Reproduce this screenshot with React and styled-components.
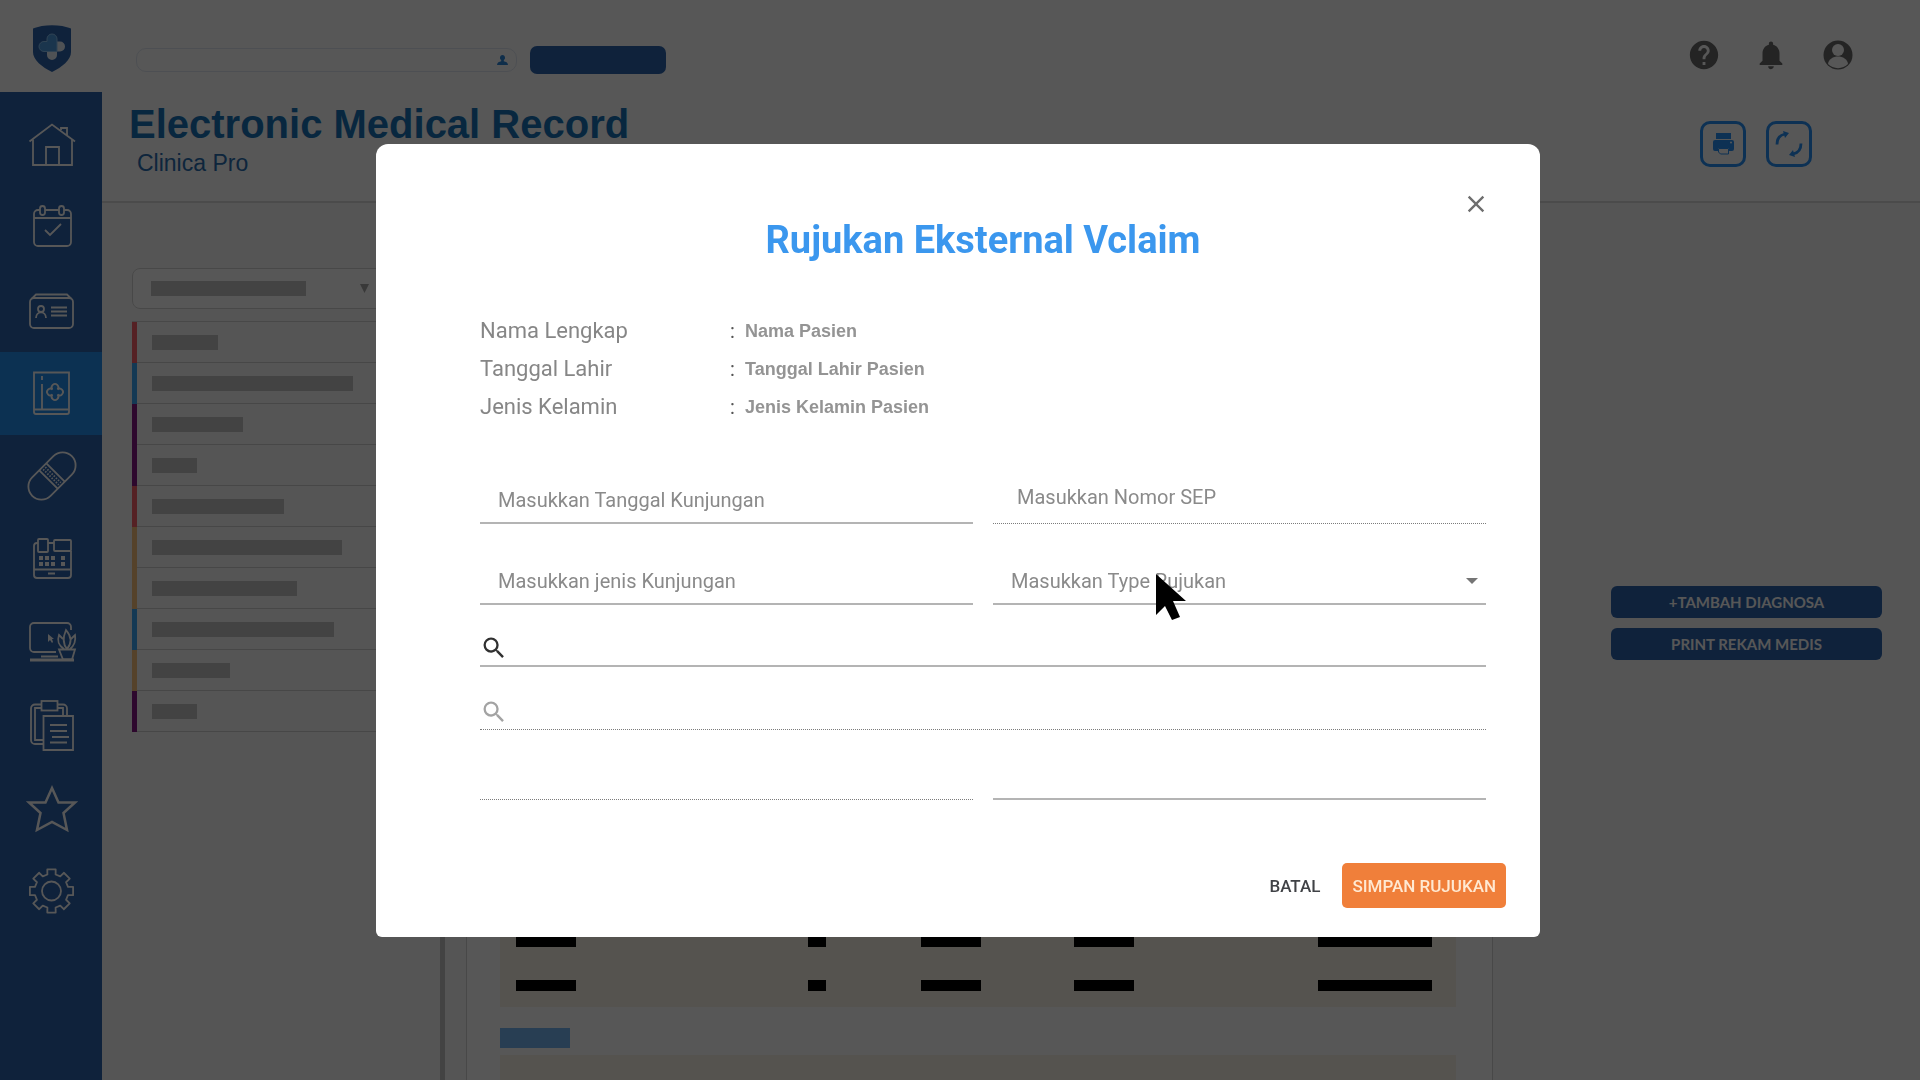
import React, { useState } from "react";
import styled, { createGlobalStyle } from "styled-components";
import { MdClose, MdHelp, MdNotifications, MdSearch } from "react-icons/md";

const HISTORY = [
  { color: "#f9616a", width: 66 },
  { color: "#3ba6f5", width: 201 },
  { color: "#841884", width: 91 },
  { color: "#841884", width: 45 },
  { color: "#f9616a", width: 132 },
  { color: "#fac27c", width: 190 },
  { color: "#fac27c", width: 145 },
  { color: "#3ba6f5", width: 182 },
  { color: "#fac27c", width: 78 },
  { color: "#841884", width: 45 },
];

const COLUMNS = [
  { col: 292, bar: 60 },
  { col: 113, bar: 18 },
  { col: 153, bar: 60 },
  { col: 244, bar: 60 },
  { bar: 114 },
];

const PATIENT = [
  { label: "Nama Lengkap", value: "Nama Pasien" },
  { label: "Tanggal Lahir", value: "Tanggal Lahir Pasien" },
  { label: "Jenis Kelamin", value: "Jenis Kelamin Pasien" },
];

// outline of the settings cog, eight teeth
const gearPath = (cx, cy) => {
  const points = [];
  for (let i = 0; i < 8; i++) {
    const mid = i * 45;
    [
      [-14, 17],
      [-11, 22],
      [11, 22],
      [14, 17],
    ].forEach(([offset, r]) => {
      const a = ((mid + offset) * Math.PI) / 180;
      points.push(`${(cx + r * Math.cos(a)).toFixed(2)} ${(cy + r * Math.sin(a)).toFixed(2)}`);
    });
  }
  return `M${points.join("L")}Z`;
};

const MENU = [
  {
    name: "Beranda",
    icon: (
      <>
        <path d="M5.5 23.5 28 6.5l23 17" />
        <path d="M9 21.5V47h39V21.5M22 47V29h13v18M37 12v-2h6v7" />
      </>
    ),
  },
  {
    name: "Jadwal",
    icon: (
      <>
        <path d="M16 9h-2a4 4 0 0 0-4 4v28a4 4 0 0 0 4 4h29a4 4 0 0 0 4-4V13a4 4 0 0 0-4-4h-3M21 9h14M10 17h37M21 29l5 5 11-11" />
        <rect x="16" y="5" width="5" height="9" rx="2.5" />
        <rect x="35" y="5" width="5" height="9" rx="2.5" />
      </>
    ),
  },
  {
    name: "Pasien",
    icon: (
      <>
        <rect x="6" y="14" width="43" height="30" rx="4" />
        <path d="M8 14.5l4-4h31l4 4" />
        <circle cx="17" cy="25" r="3" />
        <path d="M12 34c0-7.5 10-7.5 10 0M27 23.500h16M27 27.500h16M27 31.500h16" />
      </>
    ),
  },
  {
    name: "Rekam Medis",
    active: true,
    icon: (
      <>
        <path d="M10 5.5h35V45a2 2 0 0 1-2 2H12a2 2 0 0 1-2-2zM10 42.500h35M18 9v4M18 17v25" />
        <path d="M28.5 22.5a3.3 3.3 0 1 1 5 0a3.3 3.3 0 1 1 0 5a3.3 3.3 0 1 1-5 0a3.3 3.3 0 1 1 0-5z" />
      </>
    ),
  },
  {
    name: "Obat",
    icon: (
      <g transform="rotate(-45 28 26)">
        <rect x="0" y="13" width="56" height="26" rx="13" />
        <path d="M23 13v26M33 13v26" />
        <path d="M26.5 15v22M29.5 15v22" strokeDasharray="1.5 1.5" />
      </g>
    ),
  },
  {
    name: "Kasir",
    icon: (
      <>
        <path d="M14 10h-1a3 3 0 0 0-3 3v29a3 3 0 0 0 3 3h31a3 3 0 0 0 3-3V18M24 10h6M10 36.500h37M24 40.500h7" />
        <rect x="14" y="6" width="10" height="13" rx="1" />
        <rect x="30" y="7" width="17" height="11" rx="1" />
        <path d="M15 25h4m2 0h4m2 0h4m6 0h4M15 31h4m2 0h4m2 0h4m6 0h4" strokeWidth="4" />
      </>
    ),
  },
  {
    name: "Telemedis",
    icon: (
      <>
        <path d="M47 14v-3a4 4 0 0 0-4-4H10a4 4 0 0 0-4 4v21a4 4 0 0 0 4 4h22M17 40.500h17" />
        <path d="M6 44h44" strokeWidth="3" />
        <path d="M24 18v8l2-2 2 3 1-1-1-3h2z" fill="currentColor" stroke="none" />
        <path d="M35 33.500h16l-3 10h-9zM43 33c-5-6-4-12-1-19 6 7 6 13 1 19zM40 33c-6-4-7-8-5-14l4 4M46 33c5-4 6-8 5-14l-4 4" />
      </>
    ),
  },
  {
    name: "Laporan",
    icon: (
      <>
        <path d="M33 5.5h6a4 4 0 0 1 4 4V17M17 5.5h-6a4 4 0 0 0-4 4V41a4 4 0 0 0 4 4h8M33 9h6v8M17 9h-6v32h8" />
        <rect x="17.5" y="2" width="16" height="9.5" />
        <path d="M19.5 17H49v34H19.5zM26 26h17M26 32h17M28 38h17M26 43.500h17" />
      </>
    ),
  },
  {
    name: "Favorit",
    icon: (
      <path d="M28 6l6.5 14.5H51L39.5 31 43 48 28 40 13 48l3.5-17L5 20.500h16.500z" strokeWidth="2.5" />
    ),
  },
  {
    name: "Pengaturan",
    icon: (
      <>
        <path d={gearPath(27.5, 26)} strokeLinejoin="round" />
        <circle cx="27.5" cy="26" r="9.5" />
      </>
    ),
  },
];

const RecordTable = ({ rows }) => (
  <TablePanel>
    <Table>
      <colgroup>
        {COLUMNS.map((c, i) => (
          <col key={i} width={c.col} />
        ))}
      </colgroup>
      <tbody>
        {Array.from({ length: rows }, (_, r) => (
          <tr key={r}>
            {COLUMNS.map((c, i) => (
              <td key={i}>
                <CellBar $width={c.bar} />
              </td>
            ))}
          </tr>
        ))}
      </tbody>
    </Table>
  </TablePanel>
);

const ReferralModal = () => {
  const [form, setForm] = useState({
    tanggal: "",
    sep: "",
    jenis: "",
    diagnosa: "",
    poli: "",
    tujuan: "",
    catatan: "",
  });

  const bind = (name) => ({
    name,
    value: form[name],
    onChange: (e) => setForm({ ...form, [name]: e.target.value }),
  });

  return (
    <Backdrop>
      <Modal role="dialog" aria-labelledby="modal-title">
        <CloseButton type="button" aria-label="Tutup">
          <MdClose size={28} />
        </CloseButton>
        <ModalBody>
          <ModalTitle id="modal-title">Rujukan Eksternal Vclaim</ModalTitle>

          <PatientInfo>
            {PATIENT.map((p) => (
              <InfoRow key={p.label}>
                <dt>{p.label}</dt>
                <Colon>:</Colon>
                <dd>{p.value}</dd>
              </InfoRow>
            ))}
          </PatientInfo>

          <FieldRow $gap={52}>
            <Field>
              <input {...bind("tanggal")} aria-label="Tanggal Kunjungan" placeholder="Masukkan Tanggal Kunjungan" />
            </Field>
            <Field $dotted>
              <input {...bind("sep")} aria-label="Nomor SEP" placeholder="Masukkan Nomor SEP" />
            </Field>
          </FieldRow>
          <FieldRow $gap={35}>
            <Field>
              <input {...bind("jenis")} aria-label="Jenis Kunjungan" placeholder="Masukkan jenis Kunjungan" />
            </Field>
            <Field>
              <select aria-label="Type Rujukan" defaultValue="">
                <option value="">Masukkan Type Rujukan</option>
              </select>
              <Caret viewBox="0 0 12 6">
                <path d="M0 0h12L6 6z" fill="currentColor" />
              </Caret>
              <Pointer viewBox="0 0 30 46">
                <path d="M0 0v41l9-9 7 14 8-3-7-16h13z" />
              </Pointer>
            </Field>
          </FieldRow>
          <FieldRow $gap={16}>
            <SearchField>
              <MdSearch size={28} color="#303030" />
              <input {...bind("diagnosa")} aria-label="Cari diagnosa" />
            </SearchField>
          </FieldRow>
          <FieldRow $gap={17}>
            <SearchField $dotted>
              <MdSearch size={28} color="#a3a3a3" />
              <input {...bind("poli")} aria-label="Cari poli" />
            </SearchField>
          </FieldRow>
          <FieldRow $gap={24}>
            <Field $dotted>
              <input {...bind("tujuan")} aria-label="Tujuan" />
            </Field>
            <Field>
              <input {...bind("catatan")} aria-label="Catatan" />
            </Field>
          </FieldRow>
        </ModalBody>
        <ModalActions>
          <ModalButton type="button">BATAL</ModalButton>
          <ModalButton type="button" $primary>
            SIMPAN RUJUKAN
          </ModalButton>
        </ModalActions>
      </Modal>
    </Backdrop>
  );
};

const App = () => {
  return (
    <>
      <GlobalStyle />
      <Page>
        <Sidebar>
          <Logo>
            <svg width="38" height="47" viewBox="0 0 38 47">
              <path d="M0 3.5C10-1 28-1 38 3.5V27c0 8-9 15-19 20C9 42 0 35 0 27z" fill="#2c64ae" />
              <path d="M19 16.500h8a5 5 0 0 1 0 10h-3V30a5 5 0 0 1-10 0v-3.5h5z" fill="#e8f1fa" />
              <path d="M14 16.500V14a5 5 0 0 1 10 0v12.500H11a5 5 0 0 1 0-10z" fill="#4c9be0" stroke="#8cc4f4" />
            </svg>
          </Logo>
          <Menu>
            {MENU.map((item) => (
              <MenuLink key={item.name} href="#" aria-label={item.name} $active={item.active}>
                <svg width="54" height="54" viewBox="0 0 54 54" fill="none" stroke="currentColor" strokeWidth="1.8">
                  {item.icon}
                </svg>
              </MenuLink>
            ))}
          </Menu>
        </Sidebar>

        <Main>
          <Header>
            <HeaderRow>
              <SearchGroup>
                <SearchBox>
                  <input aria-label="Cari pasien" />
                  <svg width="11" height="10" viewBox="0 0 11 10">
                    <path d="M5.5 0a2.6 2.8 0 0 1 1.3 5.2v1c2 .4 4.2 1.3 4.2 3.8H0c0-2.5 2.2-3.4 4.2-3.8v-1A2.6 2.8 0 0 1 5.5 0z" fill="#2d86da" />
                  </svg>
                </SearchBox>
                <SearchButton type="button" aria-label="Cari" />
              </SearchGroup>
              <IconGroup>
                <IconButton type="button" aria-label="Bantuan">
                  <MdHelp size={34} />
                </IconButton>
                <IconButton type="button" aria-label="Notifikasi">
                  <MdNotifications size={34} />
                </IconButton>
                <IconButton type="button" aria-label="Akun">
                  <svg width="34" height="34" viewBox="0 0 34 34">
                    <circle cx="17" cy="17" r="14.5" fill="currentColor" />
                    <circle cx="17" cy="12" r="6" fill="#fff" />
                    <path d="M7 26c1-10 19-10 20 0-5 5.5-15 5.5-20 0z" fill="#fff" />
                  </svg>
                </IconButton>
              </IconGroup>
            </HeaderRow>
            <TitleRow>
              <div>
                <PageTitle>Electronic Medical Record</PageTitle>
                <PageSubtitle>Clinica Pro</PageSubtitle>
              </div>
              <ToolGroup>
                <ToolButton type="button" aria-label="Cetak">
                  <svg width="24" height="24" viewBox="0 0 24 24">
                    <path d="M5 1h15v6H5z" fill="currentColor" />
                    <path d="M4 8h17a2 2 0 0 1 2 2v7a2 2 0 0 1-2 2h-3v-3H7v3H4a2 2 0 0 1-2-2v-7a2 2 0 0 1 2-2z" fill="currentColor" />
                    <path d="M7.5 16.500h10V22h-8l-2-2z" fill="#fff" stroke="currentColor" strokeWidth="1" />
                    <circle cx="20" cy="10.5" r="1" fill="#fff" />
                  </svg>
                </ToolButton>
                <ToolButton type="button" aria-label="Muat ulang">
                  <svg width="28" height="28" viewBox="0 0 28 28" fill="none" stroke="currentColor" strokeWidth="2.8">
                    <path d="M2 14.500C2 9 5 5 10 4M26 13.500c0 5.5-3 9.5-8 10.500" />
                    <path d="M8 1l6 2-4 5zM20 27l-6-2 4-5z" fill="currentColor" stroke="none" />
                  </svg>
                </ToolButton>
              </ToolGroup>
            </TitleRow>
          </Header>

          <Content>
            <HistoryPanel>
              <FilterButton type="button" aria-label="Filter riwayat">
                <Bar $width={155} />
                <svg width="9" height="9" viewBox="0 0 9 9">
                  <path d="M0 0h9L4.500 9z" fill="#a8a8a8" />
                </svg>
              </FilterButton>
              <HistoryList>
                {HISTORY.map((h, i) => (
                  <HistoryItem key={i} $color={h.color}>
                    <Bar $width={h.width} />
                  </HistoryItem>
                ))}
              </HistoryList>
            </HistoryPanel>

            <RecordCard>
              <Chip />
              <RecordTable rows={16} />
              <Chip />
              <RecordTable rows={0} />
            </RecordCard>

            <SideActions>
              <SideButton type="button">+TAMBAH DIAGNOSA</SideButton>
              <SideButton type="button">PRINT REKAM MEDIS</SideButton>
            </SideActions>
          </Content>
        </Main>
      </Page>
      <ReferralModal />
    </>
  );
};

export default App;

const GlobalStyle = createGlobalStyle`
  * {
    box-sizing: border-box;
  }

  body {
    margin: 0;
    font-family: Roboto, "Liberation Sans", sans-serif;
  }

  button,
  input,
  select {
    font: inherit;
  }

  h1, h2, p, dl, dd, ul {
    margin: 0;
    padding: 0;
  }
`;

const Page = styled.div`
  display: flex;
  height: 100vh;
  overflow: hidden;
  background: #fff;
`;

const Sidebar = styled.aside`
  display: flex;
  flex-direction: column;
  flex: 0 0 102px;
`;

const Logo = styled.div`
  height: 92px;
  padding: 25px 0 0 2px;
  text-align: center;
`;

const Menu = styled.nav`
  flex: 1;
  padding-top: 11px;
  background: #2c64ae;
`;

const MenuLink = styled.a`
  display: flex;
  align-items: center;
  justify-content: center;
  height: 83px;
  color: #fff;
  background: ${({ $active }) => ($active ? "#2390f0" : "transparent")};
`;

const Main = styled.main`
  display: flex;
  flex-direction: column;
  flex: 1;
  min-width: 0;
`;

const Header = styled.header`
  flex: none;
  height: 203px;
  padding-top: 38px;
  border-bottom: 2px solid #dcdcdc;
`;

const HeaderRow = styled.div`
  display: flex;
  justify-content: space-between;
  padding: 0 65px 0 34px;
  height: 36px;
`;

const SearchGroup = styled.div`
  display: flex;
  align-items: center;
  gap: 13px;
  margin-top: 8px;
`;

const SearchBox = styled.div`
  display: flex;
  align-items: center;
  width: 381px;
  height: 24px;
  padding: 0 8px;
  border: 1px solid #e2e8f2;
  border-radius: 10px;

  input {
    flex: 1;
    min-width: 0;
    height: 20px;
    border: none;
    outline: none;
    background: none;
  }
`;

const SearchButton = styled.button`
  width: 136px;
  height: 28px;
  border: none;
  border-radius: 7px;
  background: #2c64ae;
`;

const IconGroup = styled.div`
  display: flex;
  gap: 33px;
`;

const IconButton = styled.button`
  display: flex;
  height: 34px;
  padding: 0;
  border: none;
  background: none;
  color: #6a6a6a;
`;

const TitleRow = styled.div`
  display: flex;
  justify-content: space-between;
  margin-top: 30px;
  padding: 0 108px 0 27px;
`;

const PageTitle = styled.h1`
  font-family: "Liberation Sans", Arial, sans-serif;
  font-size: 40px;
  font-weight: 700;
  line-height: 40px;
  color: #1874b8;
`;

const PageSubtitle = styled.p`
  margin-top: 5px;
  padding-left: 8px;
  font-family: "Liberation Sans", Arial, sans-serif;
  font-size: 23px;
  line-height: 28px;
  color: #2a6eb0;
`;

const ToolGroup = styled.div`
  display: flex;
  gap: 20px;
  margin-top: 17px;
`;

const ToolButton = styled.button`
  display: flex;
  align-items: center;
  justify-content: center;
  width: 46px;
  height: 46px;
  padding: 0;
  border: 3px solid #2790f5;
  border-radius: 10px;
  background: none;
  color: #2790f5;
`;

const Content = styled.div`
  display: flex;
  flex: 1;
  background: #fafafa;
`;

const HistoryPanel = styled.section`
  flex: 0 0 343px;
  padding: 65px 20px 0 30px;
  border-right: 5px solid #c5c5c5;
`;

const FilterButton = styled.button`
  display: flex;
  align-items: center;
  gap: 54px;
  width: 100%;
  height: 41px;
  padding: 0 18px;
  border: 1px solid #d4d4d4;
  border-radius: 8px;
  background: #fff;
`;

const HistoryList = styled.ul`
  margin-top: 12px;
  border-top: 1px solid #d4d4d4;
  list-style: none;
`;

const HistoryItem = styled.li`
  display: flex;
  align-items: center;
  height: 41px;
  padding-left: 15px;
  border-left: 5px solid ${({ $color }) => $color};
  box-shadow: inset 0 -1px 0 #d0d0d0;
`;

const Bar = styled.span`
  width: ${({ $width }) => $width}px;
  height: 15px;
  background: #c5c5c5;
`;

const RecordCard = styled.section`
  flex: 1;
  margin: 41px 0 0 21px;
  padding: 31px 36px 0 33px;
  border: 1px solid #d4d4d4;
  border-bottom: none;
  background: #fff;
`;

const Chip = styled.div`
  width: 70px;
  height: 20px;
  margin-bottom: 7px;
  background: #76b6f4;
`;

const TablePanel = styled.div`
  min-height: 120px;
  margin-bottom: 21px;
  background: #faf4e6;
`;

const Table = styled.table`
  width: 100%;
  table-layout: fixed;
  border-collapse: collapse;

  td {
    height: 44px;
    padding: 0 0 0 16px;
  }
`;

const CellBar = styled.div`
  width: ${({ $width }) => $width}px;
  height: 11px;
  background: #000;
`;

const SideActions = styled.div`
  display: flex;
  flex-direction: column;
  gap: 10px;
  flex: 0 0 427px;
  padding: 383px 38px 0 118px;
`;

const SideButton = styled.button`
  height: 32px;
  padding: 0;
  border: none;
  border-radius: 6px;
  background: #2c64ae;
  color: #fff;
  font-family: Lato, sans-serif;
  font-size: 15px;
  font-weight: 700;
`;

const Backdrop = styled.div`
  position: fixed;
  inset: 0;
  display: flex;
  align-items: flex-start;
  justify-content: center;
  padding: 144px 4px 0 0;
  background: rgba(0, 0, 0, 0.66);
`;

const Modal = styled.div`
  display: flex;
  flex-direction: column;
  width: 100%;
  max-width: 1164px;
  padding: 46px 0 29px;
  border-radius: 12px 12px 6px 6px;
  background: #fff;
`;

const CloseButton = styled.button`
  display: flex;
  align-self: flex-end;
  margin-right: 50px;
  padding: 0;
  border: none;
  background: none;
  color: #6e6e6e;
`;

const ModalBody = styled.div`
  padding: 0 54px 0 104px;
`;

const ModalTitle = styled.h2`
  font-size: 38px;
  font-weight: 700;
  line-height: 44px;
  text-align: center;
  color: #3b97ee;
`;

const PatientInfo = styled.dl`
  margin-top: 50px;
`;

const InfoRow = styled.div`
  display: grid;
  grid-template-columns: 250px 15px 1fr;
  line-height: 38px;
  color: #868686;

  dt {
    font-size: 22px;
  }

  dd {
    font-family: "Liberation Sans", Arial, sans-serif;
    font-size: 18px;
    font-weight: 700;
    color: #949494;
  }
`;

const Colon = styled.span`
  font-size: 20px;
  color: #555;
`;

const FieldRow = styled.div`
  display: flex;
  gap: 20px;
  margin-top: ${({ $gap }) => $gap}px;
`;

const Field = styled.div`
  position: relative;
  display: flex;
  align-items: center;
  flex: 1;
  height: 46px;
  padding-bottom: ${({ $dotted }) => ($dotted ? "8px" : "0")};
  border-bottom: ${({ $dotted }) => ($dotted ? "1px dotted #7c7c7c" : "2px solid #b4b4b4")};

  input,
  select {
    flex: 1;
    min-width: 0;
    height: 36px;
    padding: 0 ${({ $dotted }) => ($dotted ? "24px" : "18px")};
    border: none;
    outline: none;
    appearance: none;
    background: none;
    font-size: 20px;
    color: #8a8a8a;
  }

  input::placeholder {
    color: #8a8a8a;
    opacity: 1;
  }
`;

const SearchField = styled(Field)`
  align-items: flex-end;
  padding-bottom: 3px;
`;

const Caret = styled.svg`
  width: 12px;
  height: 6px;
  margin-right: 8px;
  color: #757575;
`;

// mouse pointer drawn over the open field
const Pointer = styled.svg`
  position: absolute;
  top: 15px;
  left: 163px;
  width: 30px;
  height: 46px;
  pointer-events: none;
`;

const ModalActions = styled.div`
  display: flex;
  justify-content: flex-end;
  margin-top: 63px;
  padding-right: 34px;
`;

const ModalButton = styled.button`
  height: 45px;
  padding: 0 ${({ $primary }) => ($primary ? "10px" : "22px")};
  border: none;
  border-radius: 5px;
  background: ${({ $primary }) => ($primary ? "#f07f3a" : "none")};
  color: ${({ $primary }) => ($primary ? "#ffe9d2" : "#404246")};
  font-size: 17px;
  font-weight: 500;
`;
